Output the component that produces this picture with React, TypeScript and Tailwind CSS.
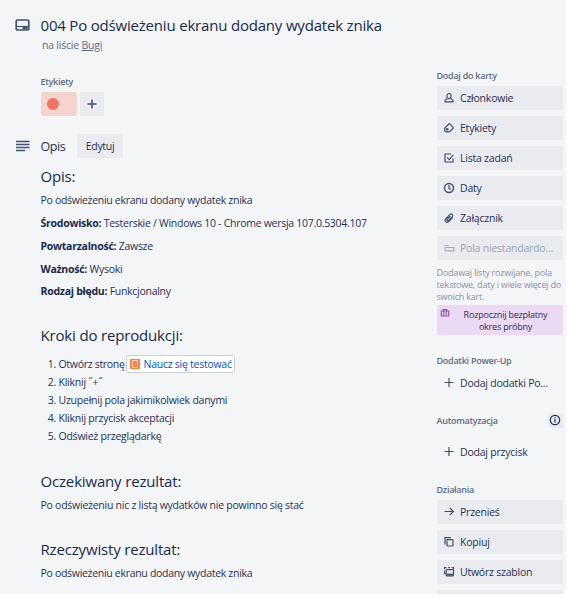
import type { ReactNode } from "react";

const stroke = { fill: "none", stroke: "currentColor", strokeWidth: 1.2 } as const;

function Icon({ children }: { children: ReactNode }) {
  return (
    <svg viewBox="0 0 12 12" className="size-3 shrink-0" {...stroke}>
      {children}
    </svg>
  );
}

const UserIcon = () => (
  <Icon>
    <ellipse cx="6" cy="4.1" rx="2.1" ry="2.6" />
    <path d="M4.300 6.500 2.300 7.900 1.900 9.900h8.200L9.700 7.900 7.700 6.500" strokeLinejoin="round" />
  </Icon>
);
const TagIcon = () => (
  <Icon>
    <path d="M1.700 6.200 5.800 2Q6.300 1.500 6.900 2L10.100 5.300Q10.600 5.900 10.100 6.400L6.600 9.800H3Q1.700 9.600 1.700 8.300Z" strokeLinejoin="round" />
    <circle cx="4.300" cy="7.300" r="0.800" />
  </Icon>
);
const CheckIcon = () => (
  <Icon>
    <path d="M8 2H2v8h8V6.500" />
    <path d="m4 5.300 2.200 2.300L10.400 2.800" />
  </Icon>
);
const ClockIcon = () => (
  <Icon>
    <circle cx="6" cy="6" r="4.500" strokeWidth="1.400" />
    <path d="M6 3v3.300l1.700 1.600" />
  </Icon>
);
const ClipIcon = () => (
  <Icon>
    <path d="M9.700 5.300 5.800 9.600C3.300 11.700.9 9.100 2.700 7l4-4.300c1.900-1.700 4 .3 2.500 2.100L5.500 8.700C4.400 9.600 3.400 8.500 4.200 7.500l3.300-3.500" />
  </Icon>
);
const FieldIcon = () => (
  <Icon>
    <path d="M1 3.500h5M1.500 5.500h9.300v3.300H2.600Q2 8.800 2 7.800V5.500" />
  </Icon>
);
const PlusIcon = () => (
  <Icon>
    <path d="M6 1.500v9M1.500 6h9" strokeWidth="1.500" />
  </Icon>
);
const ThinPlusIcon = () => (
  <Icon>
    <path d="M6 1v9M1.500 5.500h9" />
  </Icon>
);
const ArrowIcon = () => (
  <Icon>
    <path d="M1.500 5.500h9M6.700 1.800 10.400 5.500 6.700 9.200" />
  </Icon>
);
const CopyIcon = () => (
  <Icon>
    <path d="M2 8.500V1.600h6" />
    <rect x="4" y="3.600" width="6" height="6.400" rx="0.500" />
  </Icon>
);
const TemplateIcon = () => (
  <Icon>
    <path d="M1.500 3V1.600h2M5 1.600h2M8.500 1.600h2V3M1.500 4.500v3h1.500" />
    <rect x="3.200" y="3.600" width="7.300" height="6.200" rx="0.600" />
    <path d="M4 8.500h6" strokeWidth="1.800" />
  </Icon>
);

function SideButton({ icon, label, plain = false }: { icon: ReactNode; label: string; plain?: boolean }) {
  return (
    <button
      className={`flex h-6 w-[126px] items-center rounded-[2px] pl-[5.5px] text-left ${plain ? "" : "bg-[#eaebee]"}`}
    >
      <span className="flex w-[17.5px] text-[#42526e]">{icon}</span>
      <span className="text-[10.5px] leading-[18px] tracking-[-0.22px] whitespace-nowrap">{label}</span>
    </button>
  );
}

function SideTitle({ children }: { children: string }) {
  return (
    <h3 className="-ml-[0.5px] text-[9px] leading-4 font-semibold tracking-[-0.26px] text-[#5e6c84]">{children}</h3>
  );
}

function Heading({ children, space }: { children: string; space: string }) {
  return (
    <h2 className={`text-[15px] leading-5 font-medium tracking-[-0.17px] text-[#172b4d] ${space}`}>{children}</h2>
  );
}

const details = [
  { name: "Środowisko:", value: "Testerskie / Windows 10 - Chrome wersja 107.0.5304.107" },
  { name: "Powtarzalność:", value: "Zawsze" },
  { name: "Ważność:", value: "Wysoki" },
  { name: "Rodzaj błędu:", value: "Funkcjonalny" },
];

const steps = ["Kliknij ˝+˝", "Uzupełnij pola jakimikolwiek danymi", "Kliknij przycisk akceptacji", "Odśwież przeglądarkę"];

export default function App() {
  return (
    <div className="h-[598px] w-[568px] overflow-hidden bg-white font-['Open_Sans',sans-serif] text-[#1f3354]">
      <div className="flex h-[594px] w-[566px] overflow-hidden bg-[#f4f5f7]">
        <main className="w-[436px] shrink-0 pt-[15px]">
          <header className="flex">
            <div className="w-[40.5px] shrink-0 pt-1 pl-[15px]">
              <svg viewBox="0 0 15 12" className="h-3 w-[15px] text-[#42526e]" {...stroke}>
                <rect x="1.200" y="1" width="12.600" height="10" rx="1.300" strokeWidth="1.700" />
                <path d="M2 7.500h11" />
                <path d="M7.500 9h5" strokeWidth="2.500" />
              </svg>
            </div>
            <div>
              <h1 className="h-5 text-[15px] leading-5 font-medium tracking-[-0.19px] whitespace-nowrap text-[#172b4d]">
                004 Po odświeżeniu ekranu dodany wydatek znika
              </h1>
              <p className="pt-0.5 pl-[1.5px] text-[10.5px] leading-4 tracking-[-0.22px] text-[#5e6c84]">
                na liście <span className="underline">Bugi</span>
              </p>
            </div>
          </header>

          <section className="pt-[21px] pl-[41px]">
            <SideTitle>Etykiety</SideTitle>
            <div className="mt-0.5 flex gap-[3px]">
              <span className="flex h-6 w-9 items-center rounded-[2px] bg-[#f5d3ce] pl-1.5">
                <span className="size-3 rounded-full bg-[#ef7564]" />
              </span>
              <button className="grid size-6 place-items-center rounded-[2px] bg-[#eaebee] text-[#42526e]">
                <PlusIcon />
              </button>
            </div>
          </section>

          <section>
            <div className="mt-[18px] flex h-6 items-center">
              <svg viewBox="0 0 15 12" className="ml-[15px] h-3 w-[15px] text-[#42526e]" {...stroke} strokeWidth="1.4">
                <path d="M1 1.500h13.500M1 4.500h13.500M1 7.500h13.500M1 10.500h9" />
              </svg>
              <h2 className="ml-[10.5px] w-[36.5px] pt-px text-[12.5px] leading-5 font-medium tracking-[-0.4px]">Opis</h2>
              <button className="h-6 w-[46px] rounded-[2px] bg-[#eaebee] pt-px text-[10.5px] tracking-[-0.3px]">
                Edytuj
              </button>
            </div>
            <article className="pl-[40.5px] text-[10.5px] leading-[18px] tracking-[-0.3px]">
              <Heading space="mt-2">Opis:</Heading>
              <p className="mt-[5px]">Po odświeżeniu ekranu dodany wydatek znika</p>
              {details.map((d) => (
                <p key={d.name} className="mt-[5px] h-[17.8px] tracking-[-0.28px] whitespace-nowrap">
                  <b className="tracking-[-0.26px] text-[#172b4d]">{d.name}</b> <span>{d.value}</span>
                </p>
              ))}
              <Heading space="mt-[25px]">Kroki do reprodukcji:</Heading>
              <ol className="mt-[10px] list-decimal pl-[18px] tracking-[-0.24px]">
                <li>
                  <span className="flex h-[18px] items-center whitespace-nowrap">
                    <span className="w-[67.5px] tracking-[-0.3px]">Otwórz stronę</span>
                    <a className="flex h-[18px] w-[109px] items-center rounded-[2px] border border-[#c9cdd6] bg-white pl-[3px] text-[#0052cc]">
                      <span className="mr-[3.5px] grid size-[10px] place-items-center bg-[#ff7f45]">
                        <span className="h-2 w-1.5 border border-[#ffd0a8]" />
                      </span>
                      <span className="tracking-[-0.26px]">Naucz się testować</span>
                    </a>
                  </span>
                </li>
                {steps.map((s) => (
                  <li key={s}>{s}</li>
                ))}
              </ol>
              <Heading space="mt-[26px]">Oczekiwany rezultat:</Heading>
              <p className="mt-[5px] tracking-[-0.25px]">Po odświeżeniu nic z listą wydatków nie powinno się stać</p>
              <Heading space="mt-[25px]">Rzeczywisty rezultat:</Heading>
              <p className="mt-[5px]">Po odświeżeniu ekranu dodany wydatek znika</p>
            </article>
          </section>
        </main>

        <aside className="w-[130px] shrink-0 pt-[68px] pl-[1px]">
          <SideTitle>Dodaj do karty</SideTitle>
          <div className="mt-0.5 flex flex-col gap-1.5">
            <SideButton icon={<UserIcon />} label="Członkowie" />
            <SideButton icon={<TagIcon />} label="Etykiety" />
            <SideButton icon={<CheckIcon />} label="Lista zadań" />
            <SideButton icon={<ClockIcon />} label="Daty" />
            <SideButton icon={<ClipIcon />} label="Załącznik" />
            <div className="w-[126px] rounded-[2px] bg-[#eaebee]">
              <div className="opacity-40">
                <SideButton icon={<FieldIcon />} label="Pola niestandardo..." plain />
              </div>
            </div>
          </div>
          <p className="mt-[7px] -ml-[0.5px] text-[9px] leading-3 tracking-[-0.2px] whitespace-nowrap text-[#8993a4]">
            Dodawaj listy rozwijane, pola
            <br />
            tekstowe, daty i wiele więcej do
            <br />
            swoich kart.
          </p>
          <button className="mt-0.5 flex h-[30px] w-[126px] rounded-[2px] bg-[#ecd9f3] pt-[3px] pr-[2px] pl-[3px] text-[9px] leading-3 tracking-[-0.2px]">
            <svg viewBox="0 0 10 10" className="size-[10px] text-[#8f5bad]" {...stroke}>
              <path d="M3.200 3V1.700h3.600V3M1.300 3h7.400v5H1.300zM3.700 3v5M6.300 3v5" />
            </svg>
            <span className="flex-1 pt-px whitespace-nowrap">
              Rozpocznij bezpłatny
              <br />
              okres próbny
            </span>
          </button>
          <div className="pt-[18px]">
            <SideTitle>Dodatki Power-Up</SideTitle>
          </div>
          <div className="mt-0.5">
            <SideButton icon={<ThinPlusIcon />} label="Dodaj dodatki Po..." plain />
          </div>
          <div className="mt-[18px] flex h-4 w-[126px] items-center justify-between">
            <SideTitle>Automatyzacja</SideTitle>
            <span className="mt-[-2px] mr-[0.5px] grid size-[15px] place-items-center rounded-[2px] bg-[#e8eaee]">
              <Icon>
                <circle cx="6" cy="6" r="4.700" />
                <path d="M6 5.200v3.300M6 3.200v1.200" />
              </Icon>
            </span>
          </div>
          <div className="mt-[11px]">
            <SideButton icon={<ThinPlusIcon />} label="Dodaj przycisk" plain />
          </div>
          <div className="pt-[18px]">
            <SideTitle>Działania</SideTitle>
          </div>
          <div className="mt-0.5 flex flex-col gap-1.5">
            <SideButton icon={<ArrowIcon />} label="Przenieś" />
            <SideButton icon={<CopyIcon />} label="Kopiuj" />
            <SideButton icon={<TemplateIcon />} label="Utwórz szablon" />
            <div className="h-6 w-[126px] rounded-[2px] bg-[#eaebee]" />
          </div>
        </aside>
      </div>
    </div>
  );
}
